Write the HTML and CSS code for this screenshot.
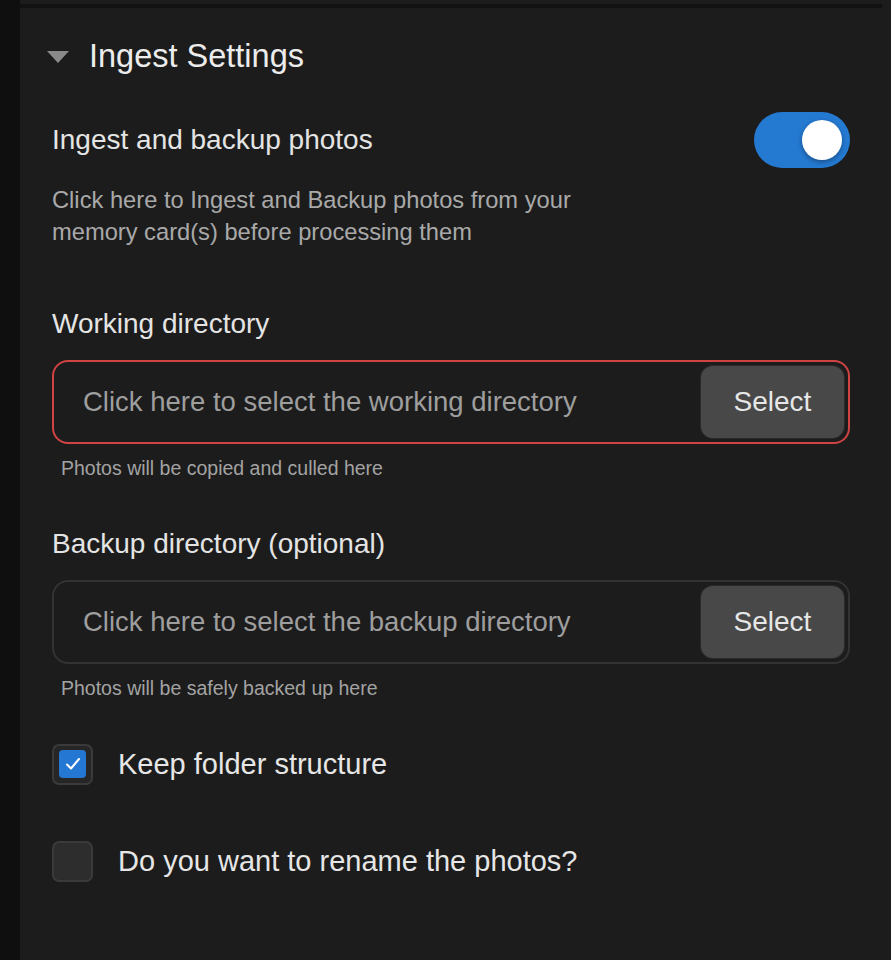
FILE: index.html
```html
<!DOCTYPE html>
<html lang="en">
<head>
<meta charset="utf-8">
<title>Ingest Settings</title>
<link rel="stylesheet" href="styles.css">
</head>
<body>
<div class="app">
  <div class="rail"></div>
  <main class="panel">
    <div class="topbar"></div>
    <div class="content">
      <div class="section-header">
        <svg class="caret" width="22" height="12" viewBox="0 0 22 12"><path d="M0 0 H22 L11 12 Z" fill="#8a8a8a"/></svg>
        <h1 class="section-title">Ingest Settings</h1>
      </div>

      <div class="toggle-row">
        <span class="label">Ingest and backup photos</span>
        <span class="toggle"><span class="knob"></span></span>
      </div>
      <p class="description">Click here to Ingest and Backup photos from your memory card(s) before processing them</p>

      <div class="field first">
        <div class="label">Working directory</div>
        <div class="picker error">
          <span class="placeholder">Click here to select the working directory</span>
          <button class="select-btn">Select</button>
        </div>
        <div class="helper">Photos will be copied and culled here</div>
      </div>

      <div class="field">
        <div class="label">Backup directory (optional)</div>
        <div class="picker">
          <span class="placeholder">Click here to select the backup directory</span>
          <button class="select-btn">Select</button>
        </div>
        <div class="helper">Photos will be safely backed up here</div>
      </div>

      <div class="check-row first-check">
        <span class="checkbox checked">
          <span class="check-fill">
            <svg width="16" height="14" viewBox="0 0 16 14"><path d="M2 7.5 L6 11.5 L14 2" fill="none" stroke="#ffffff" stroke-width="2" stroke-linecap="round" stroke-linejoin="round"/></svg>
          </span>
        </span>
        <span class="check-label">Keep folder structure</span>
      </div>

      <div class="check-row second-check">
        <span class="checkbox"></span>
        <span class="check-label">Do you want to rename the photos?</span>
      </div>
    </div>
  </main>
</div>
</body>
</html>
```

FILE: styles.css
```css
* { box-sizing: border-box; }

html, body {
  margin: 0;
  padding: 0;
  background: #0f0f0f;
  font-family: "Liberation Sans", Arial, sans-serif;
}

.app {
  display: flex;
  min-height: 960px;
}

.rail {
  width: 20px;
  flex: 0 0 20px;
  background: #0f0f0f;
}

.panel {
  flex: 1;
  background: #1c1c1c;
  padding-top: 4px;
}

.topbar {
  height: 4px;
  background: #121212;
  margin-right: 9px;
}

.content {
  padding: 0 41px 0 32px;
}

.section-header {
  display: flex;
  align-items: center;
  gap: 20px;
  margin-top: 30px;
  margin-left: -5px;
  height: 36px;
}

.caret { flex: 0 0 auto; margin-top: 2px; }

.section-title {
  margin: 0;
  font-size: 32.5px;
  line-height: 36px;
  font-weight: 400;
  color: #ececec;
}

.label {
  font-size: 28px;
  line-height: 36px;
  color: #e4e4e4;
}

.toggle-row {
  display: flex;
  align-items: center;
  justify-content: space-between;
  margin-top: 38px;
  height: 56px;
}

.toggle {
  display: flex;
  justify-content: flex-end;
  align-items: center;
  width: 96px;
  height: 56px;
  border-radius: 28px;
  background: #2479d1;
  padding: 0 8px;
}

.knob {
  width: 40px;
  height: 40px;
  border-radius: 50%;
  background: #ffffff;
  box-shadow: 0 2px 5px rgba(0, 0, 0, 0.35);
}

.description {
  margin: 16px 0 0;
  max-width: 560px;
  font-size: 23.7px;
  line-height: 32px;
  color: #a9a9a9;
}

.field.first { margin-top: 58px; }
.field { margin-top: 46px; }

.picker {
  display: flex;
  align-items: center;
  justify-content: space-between;
  margin-top: 18px;
  height: 84px;
  padding: 4px;
  border: 2px solid #333333;
  border-radius: 16px;
}

.picker.error { border-color: #d04343; }

.placeholder {
  margin-left: 25px;
  font-size: 27.5px;
  color: #9e9e9e;
}

.select-btn {
  width: 143px;
  height: 72px;
  border: none;
  border-radius: 12px;
  background: #484848;
  box-shadow: 0 0 0 1px #2a2a2a;
  font-family: "Liberation Sans", Arial, sans-serif;
  font-size: 28px;
  color: #e6e6e6;
  padding: 0;
}

.helper {
  margin-top: 12px;
  margin-left: 9px;
  font-size: 19.5px;
  line-height: 24px;
  color: #a3a3a3;
}

.check-row {
  display: flex;
  align-items: center;
  gap: 25px;
  height: 40px;
}

.check-row.first-check { margin-top: 44px; }
.check-row.second-check { margin-top: 57px; }

.checkbox {
  display: flex;
  align-items: center;
  justify-content: center;
  width: 41px;
  height: 41px;
  border: 2px solid #3a3a3a;
  border-radius: 7px;
  background: #2d2d2d;
}

.checkbox.checked { background: #262626; }

.check-fill {
  display: flex;
  align-items: center;
  justify-content: center;
  width: 27px;
  height: 28px;
  border-radius: 4px;
  background: #2478d4;
}

.check-label {
  font-size: 29px;
  line-height: 36px;
  color: #e6e6e6;
}
```
